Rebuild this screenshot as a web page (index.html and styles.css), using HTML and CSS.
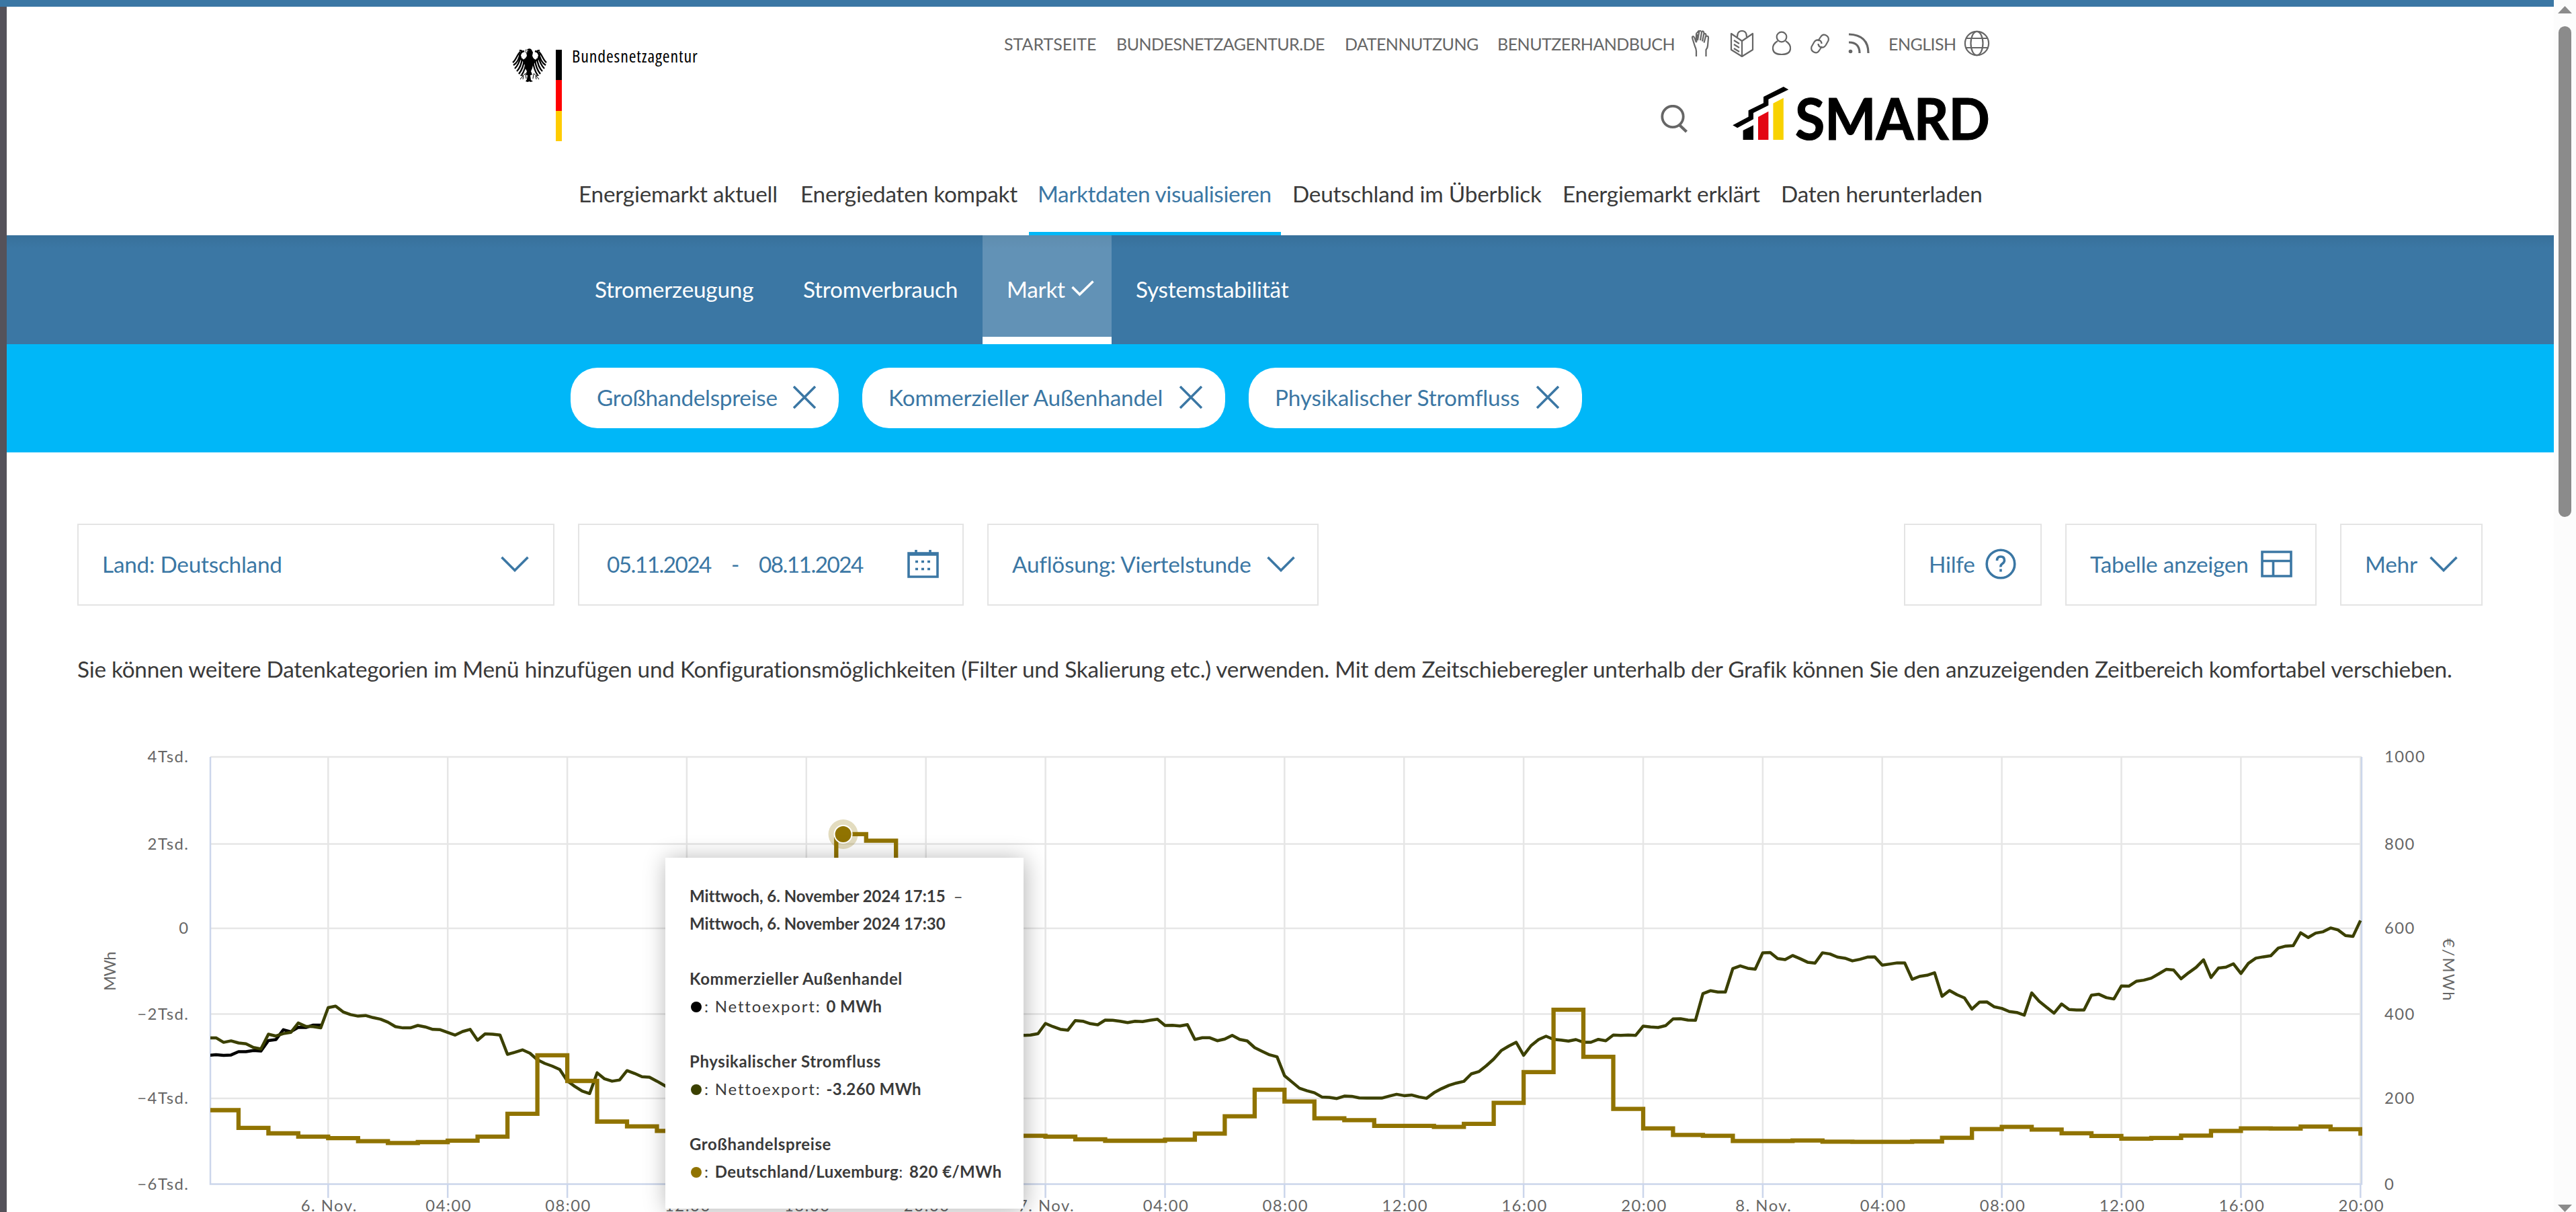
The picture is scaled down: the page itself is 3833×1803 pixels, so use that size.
FILE: index.html
```
<!DOCTYPE html>
<html lang="de">
<head>
<meta charset="utf-8">
<title>SMARD | Marktdaten visualisieren</title>
<link rel="stylesheet" href="styles.css">
</head>
<body>
<div class="window">
  <div class="topbar"></div>
  <div class="frame"></div>
  <main class="page">
    <header class="header">
      <div class="head-top">
        <a class="brand">
          <svg class="eagle" viewBox="0 0 52 50" width="52" height="50">
            <path d="M23 1q4-2 6 1l2 4-1 5q2 6 7 6l-6 8q-1 6-3 9l2 5-3 1 1 7 3 2-4 1-1-1-3 1-3-1 2-3 1-6-3-1 2-5q-3-4-3-9l-4-8q5-1 7-6l-1-5z"/>
            <g id="wing" fill="none" stroke="#000">
              <path stroke-width="2.600" d="M20 19C12 18 9 10 15 5l3-1M15 4l-4-1"/>
              <path stroke-width="2.300" d="M12 5C7 10 6 17 1 21M12 8C10 16 8 21 2 25M13 12C11 20 9 25 4 30M15 15C14 23 12 29 7 34M18 17C17 26 15 32 10 38M21 19C20 29 18 34 14 40"/>
              <path stroke-width="1" d="M20 37l-4 4-4-1M17 41l-1 5M16 41l-4 5M20 38l1 7"/>
            </g>
            <use href="#wing" transform="matrix(-1 0 0 1 52 0)"/>
            <path d="M20 2l5 1-3 2 2 2-4-1z" fill="#fff" stroke="#000" stroke-width=".7"/>
          </svg>
          <span class="flag"><i></i><i></i><i></i></span>
          <span class="brand-name">Bundesnetzagentur</span>
        </a>
        <div class="meta">
          <nav class="service">
            <a class="start">STARTSEITE</a><a>BUNDESNETZAGENTUR.DE</a><a>DATENNUTZUNG</a><a>BENUTZERHANDBUCH</a>
            <svg viewBox="2516 45 34 40" width="34" height="40"><path d="M2524 84v-8q0-3-2-7l-3.500-11q-1-4 .6-4t3 4l1.900 5M2524 63v-12q0-2 1.500-2.500l2.500-3q2-1 3 1.500M2524 63l2-12M2530 60l2-12q1.500-3 3-.5l.5 2-2.500 12M2526 60l2.500-14M2535.500 50q3-.5 3 2.500l-3 11M2539 54q3-1 3 2l-1 12q-.5 4-2.500 6v10"/></svg>
            <svg viewBox="2573 45 38 40" width="38" height="40"><path d="M2576 50l16 11 16-11v24l-16 10-16-10zM2592 61v23M2585 55q0-9 7-9t7 9M2580 60l8 5M2580 66l8 5M2580 72l8 5"/></svg>
            <svg viewBox="2635 45 32 40" width="32" height="40"><circle cx="2651" cy="55" r="7.300"/><path d="M2645 61q-8 5-7 12 1 8 13 8t13-8q1-7-7-12"/></svg>
            <svg viewBox="2691 45 34 40" width="34" height="40"><path d="M2705 61l4-6q3-5 8-2.500t3.500 8l-4 7q-3 4.500-8 2.500-3-1.500-3-5M2711 69l-4 6q-3 5-8 2.500t-3.500-8l4-7q3-4.500 8-2.500 3 1.500 3 5"/></svg>
            <svg viewBox="2748 45 36 40" width="36" height="40"><circle cx="2753.500" cy="76.500" r="2.800" class="solid"/><path d="M2751 63q16 0 16 16M2751 51q29 1 29 28" class="heavy"/></svg>
            <a>ENGLISH</a>
            <svg viewBox="2921 45 40 40" width="40" height="40"><circle cx="2941.500" cy="64.500" r="17.600"/><ellipse cx="2941.500" cy="64.500" rx="9" ry="17.600"/><path d="M2926 57h31M2926 71h31"/></svg>
          </nav>
          <div class="logo-row">
            <svg class="search" viewBox="0 0 42 42" width="42" height="42"><circle cx="19" cy="17.500" r="15.700"/><path d="M29 30l10.500 10"/></svg>
            <svg class="logo" viewBox="0 0 386 82" width="386" height="82">
              <path d="M76.800 1l7.500 4.300-29.900 14.400v9L32 40v9.300L8.200 62.300l-7-4 23.400-12.600v-9.400L47 25.300V16z"/>
              <path d="M16.600 80V66L32 58.300V80z"/>
              <path fill="#e30613" d="M39 80V46l15.400-8.300V80z"/>
              <path fill="#f8d200" d="M61.400 80V25.700l15.400-8V80z"/>
              <text x="94" y="80" textLength="290" lengthAdjust="spacingAndGlyphs">SMARD</text>
            </svg>
          </div>
        </div>
      </div>
      <nav class="mainnav">
        <a>Energiemarkt aktuell</a><a>Energiedaten kompakt</a><a class="active">Marktdaten visualisieren</a><a>Deutschland im Überblick</a><a>Energiemarkt erklärt</a><a>Daten herunterladen</a>
      </nav>
    </header>

    <nav class="tabs">
      <a>Stromerzeugung</a><a>Stromverbrauch</a>
      <a class="active">Markt <svg viewBox="0 0 34 24" width="34" height="24"><path d="M1.500 10l11 11L32.500 1.500"/></svg></a>
      <a>Systemstabilität</a>
    </nav>

    <div class="filters">
      <span class="pill">Großhandelspreise <svg viewBox="0 0 34 34" width="34" height="34"><path d="M1 1l32 32M33 1L1 33"/></svg></span>
      <span class="pill">Kommerzieller Außenhandel <svg viewBox="0 0 34 34" width="34" height="34"><path d="M1 1l32 32M33 1L1 33"/></svg></span>
      <span class="pill">Physikalischer Stromfluss <svg viewBox="0 0 34 34" width="34" height="34"><path d="M1 1l32 32M33 1L1 33"/></svg></span>
    </div>

    <section class="toolbar">
      <div class="box country">Land: Deutschland <svg viewBox="0 0 42 24" width="42" height="24"><path d="M1.500 2L21 21.500 40.500 2"/></svg></div>
      <div class="box dates"><span>05.11.2024</span><span class="dash">-</span><span>08.11.2024</span>
        <svg viewBox="0 0 47 42" width="47" height="42"><path d="M2 5h43v35H2zM13 0v5M34 0v5M2 7h43"/><path stroke-dasharray="4 5" d="M12 17.500h24M12 28.500h24"/></svg></div>
      <div class="box res">Auflösung: Viertelstunde <svg viewBox="0 0 42 24" width="42" height="24"><path d="M1.500 2L21 21.500 40.500 2"/></svg></div>
      <div class="box help">Hilfe <svg viewBox="0 0 46 46" width="46" height="46"><circle cx="23" cy="23" r="20.800"/><path d="M17.500 18q0-6 5.500-6t5.500 5.500q0 3-3 5t-2.500 5M23 30.500v4"/></svg></div>
      <div class="box table">Tabelle anzeigen <svg viewBox="0 0 47 40" width="47" height="40"><path d="M2 2h43v36H2zM2 15.500h43M18.500 15.500V38"/></svg></div>
      <div class="box more">Mehr <svg viewBox="0 0 42 24" width="42" height="24"><path d="M1.500 2L21 21.500 40.500 2"/></svg></div>
    </section>

    <p class="intro">Sie können weitere Datenkategorien im Menü hinzufügen und Konfigurationsmöglichkeiten (Filter und Skalierung etc.) verwenden. Mit dem Zeitschieberegler unterhalb der Grafik können Sie den anzuzeigenden Zeitbereich komfortabel verschieben.</p>

    <section class="chart">
      <svg id="chart" viewBox="10 1100 3790 703" width="3790" height="703"></svg>
      <div class="tooltip">
        <div class="date"><b>Mittwoch, 6. November 2024 17:15</b>&nbsp; –</div>
        <div class="date"><b>Mittwoch, 6. November 2024 17:30</b></div>
        <div class="group"><b>Kommerzieller Außenhandel</b></div>
        <div><i class="dot black"></i><span class="plain">: Nettoexport: </span><b>0 MWh</b></div>
        <div class="group"><b>Physikalischer Stromfluss</b></div>
        <div><i class="dot green"></i><span class="plain">: Nettoexport: </span><b>-3.260 MWh</b></div>
        <div class="group"><b>Großhandelspreise</b></div>
        <div><i class="dot gold"></i><span class="plain">: </span><b>Deutschland/Luxemburg</b><span class="plain">: </span><b>820 €/MWh</b></div>
      </div>
    </section>
  </main>
  <aside class="scrollbar"><svg viewBox="0 0 21 11" width="21" height="11"><path d="M10.500 0L21 11H0z"/></svg><i class="thumb"></i><svg class="down" viewBox="0 0 21 11" width="21" height="11"><path d="M10.500 11L21 0H0z"/></svg></aside>
</div>
<script src="chart.js"></script>
</body>
</html>
```
FILE: styles.css
```
* { box-sizing: border-box; }
body {
  margin: 0;
  background: #fff;
  color: #3a3a3a;
  font: 33.3px/40px Lato, "Noto Sans", sans-serif;
  letter-spacing: -0.22px;
}
a { white-space: nowrap; }
svg { flex: none; display: block; }

.window {
  display: grid;
  grid-template: 10px 1793px / 10px 3790px 33px;
  width: 3833px;
  height: 1803px;
  overflow: hidden;
}
.topbar { grid-area: 1 / 1 / 2 / 3; background: #3b77a4; }
.frame { grid-area: 2 / 1; background: #55525a; }
.page { grid-area: 2 / 2; min-width: 0; overflow: hidden; }

.scrollbar {
  grid-area: 1 / 3 / 3 / 4;
  display: flex;
  flex-direction: column;
  padding: 9px 6px 0;
  background: #fcfcfc;
  fill: #8b8b8b;
}
.thumb { width: 19px; height: 733px; margin: 19px 0 0 1px; border-radius: 10px; background: #8b8b8b; }
.scrollbar .down { margin-top: 1023px; }

/* header */
.header { height: 340px; padding-left: 752px; }
.head-top { display: flex; height: 208px; }
.brand { display: flex; width: 732px; padding-top: 62px; align-items: flex-start; }
.flag { width: 9px; margin: 2px 15px 0 13px; }
.flag i { display: block; height: 45.300px; background: #000; }
.flag i:nth-child(2) { background: #f00; }
.flag i:nth-child(3) { background: #fc0; }
.brand-name {
  color: #000;
  font: 26px/30px "Open Sans", sans-serif;
  font-stretch: 75%;
  letter-spacing: 0.850px;
  margin-top: -4px;
}
.meta { padding-top: 35px; }
.service {
  display: grid;
  grid-template-columns: 167px 340px 227px 288px 57px 62px 56px 57px 62px 111px 40px;
  align-items: center;
  height: 40px;
  color: #666;
  font-size: 25px;
  line-height: 30px;
  letter-spacing: -0.520px;
}
.service .start { letter-spacing: 0; }
.service svg, .search { fill: none; stroke: #666; stroke-width: 2.200; stroke-linejoin: round; }
.service .solid { fill: #666; stroke: none; }
.service .heavy { stroke-width: 3.200; }
.logo-row { display: flex; margin-top: 43px; padding-left: 976px; align-items: flex-start; }
.search { margin-top: 28px; }
.search circle { stroke-width: 3.800; }
.search path { stroke-width: 4.400; }
.logo { margin-left: 65px; }
.logo text { font: bold 87px Lato, sans-serif; letter-spacing: 0; stroke: #000; stroke-width: 1.200; }

.mainnav {
  display: grid;
  grid-template-columns: 330px 353px 379px 402px 325px 310px;
  height: 132px;
  margin-left: 99px;
}
.mainnav a { padding-top: 50px; }
.mainnav .active {
  width: 375px;
  margin-left: -13px;
  padding-left: 13px;
  border-bottom: 5px solid #00b7f8;
  color: #3b77a4;
  letter-spacing: -0.380px;
}

/* category tabs */
.tabs {
  display: flex;
  height: 162px;
  padding-left: 839px;
  color: #fff;
  background: linear-gradient(rgba(0, 0, 0, 0.060), transparent 20px) #3b77a4;
}
.tabs a { width: 311px; padding: 60px 0 0 36px; }
.tabs a:nth-child(2) { width: 302px; padding-left: 35px; }
.tabs .active {
  display: flex;
  width: 192px;
  padding-left: 36px;
  border-bottom: 11px solid #fff;
  background: rgba(255, 255, 255, 0.200);
}
.tabs .active svg { margin: 7px 0 0 9px; }
.tabs svg, .pill svg, .box svg { fill: none; stroke: currentColor; stroke-width: 3.600; }

.filters { display: flex; gap: 35px; height: 161px; padding: 35px 0 0 839px; background: #00b7f8; }
.pill {
  display: flex;
  align-items: center;
  justify-content: space-between;
  width: 399px;
  height: 90px;
  padding: 0 34px 2px 39px;
  border-radius: 40px;
  background: #fff;
  color: #3b77a4;
  letter-spacing: -0.100px;
}
.pill:first-child { letter-spacing: -0.280px; }
.pill:nth-child(2) { width: 540px; }
.pill:nth-child(3) { width: 496px; }

/* toolbar */
.toolbar { display: flex; gap: 35px; padding: 106px 0 0 105px; color: #3b77a4; }
.box {
  display: flex;
  align-items: center;
  justify-content: space-between;
  height: 122px;
  padding: 0 36px 2px 35px;
  border: 2px solid #e4e4e4;
}
.country { width: 710px; }
.dates { width: 574px; padding-left: 41px; padding-right: 35px; letter-spacing: -1.540px; }
.dates svg { margin-left: 36px; }
.res { width: 493px; padding-right: 33px; }
.help { width: 205px; margin-left: 836px; }
.table { width: 374px; padding-right: 34px; }
.more { width: 212px; padding-right: 35px; }

.intro { margin: 74px 0 0; padding-left: 105px; white-space: nowrap; letter-spacing: -0.256px; }

/* chart */
.chart { position: relative; margin-top: 85px; }
.chart text { font: 23.800px Lato, sans-serif; fill: #666; letter-spacing: 1.500px; }
.grid { stroke: #e6e6e6; stroke-width: 2.500; }
.axis { stroke: #ccd6eb; stroke-width: 2.500; }
.line { fill: none; stroke-width: 4.500; stroke-linejoin: round; }
.commercial { stroke: #000; }
.physical { stroke: #3b4000; }
.price { stroke: #907300; stroke-width: 6.300; stroke-linejoin: miter; }

.tooltip {
  position: absolute;
  left: 980px;
  top: 176px;
  width: 533px;
  height: 522px;
  padding: 36px 0 0 36px;
  background: #fff;
  box-shadow: 2px 2px 32px rgba(0, 0, 0, 0.300);
  font-size: 24px;
  line-height: 41px;
  letter-spacing: 0.420px;
  white-space: nowrap;
}
.tooltip .date { letter-spacing: -0.050px; }
.tooltip .group { margin-top: 41px; }
.tooltip .group b { letter-spacing: 0.600px; }
.tooltip .plain { letter-spacing: 1.800px; }
.dot { display: inline-block; width: 16px; height: 16px; margin: 0 4px 0 2px; border-radius: 50%; }
.black { background: #000; }
.green { background: #3b4000; }
.gold { background: #907300; }
```
FILE: chart.js
```
const svg = document.getElementById("chart");
const MIDNIGHT = 488.3, HOUR = 44.47;
const BOTTOM = 1761.5, LEFT = 313, RIGHT = 3514;
const out = [];
const x = h => (MIDNIGHT + h * HOUR).toFixed(1);

// grid and axes
const rows = [["4Tsd.", 1000, 1126], ["2Tsd.", 800, 1255.5], ["0", 600, 1381], ["−2Tsd.", 400, 1508.5], ["−4Tsd.", 200, 1634], ["−6Tsd.", 0, 1761.5]];
for (const [l, r, y] of rows) {
  if (y < BOTTOM) out.push(`<path class="grid" d="M${LEFT} ${y}H${RIGHT}"/>`);
  out.push(`<text x="281.500" y="${y + 8}" text-anchor="end">${l}</text><text x="3548" y="${y + 8}">${r}</text>`);
}
for (let h = 0; h <= 68; h += 4) {
  out.push(`<path class="grid" d="M${x(h)} 1126V${BOTTOM}"/><path class="axis" d="M${x(h)} ${BOTTOM}V1782"/>`);
  const label = h % 24 ? String(h % 24).padStart(2, "0") + ":00" : `${6 + h / 24}. Nov.`;
  out.push(`<text x="${+x(h) + 1.5}" y="1802" text-anchor="middle">${label}</text>`);
}
out.push(`<path class="axis" fill="none" d="M${LEFT} 1126V${BOTTOM}H${RIGHT}V1126"/>`);
out.push(`<text transform="translate(172 1474) rotate(-90)" textLength="60">MWh</text>`);
out.push(`<text transform="translate(3635 1396) rotate(90)" textLength="94">€/MWh</text>`);

// series blocks: first step, y origin, y unit, readings
const physical = [
  [-16, 1100, 0.44836, "990 990 1005 1000 1007 1010 1022 1027 978 984 976 972 941 952 953 957 890 885 904 913 918 916 923 928 938 953 957 957 949 954 962 963 972 981 969 962 998 977 978 981 1045 1038 1030 1041 1063 1075 1084 1095 1133 1151 1167 1175 1106 1126 1134 1130 1099 1108 1119 1121 1134 1148 1162"],
  [92, 1280, 0.33356, "781 780 779 773 727 741 753 757 714 717 728 733 712 713 717 723 717 719 713 708 736 735 738 732 798 791 791 804 797 780 798 805 835 851 867 876 960 988 1016 1027 1036 1055 1057 1062 1051 1052 1059 1060 1060 1060 1051 1043 1049 1046 1055 1061 1036 1018 1003 993 985 952 942 916 886 848 828 811 869 826 799 784 798 801 806 799 811 811 798 804 779 780 779 780 739 743 745 737 707 706 712 713 594 581 587 587 482 470 481 485 412 411 438 442 424 438 454 458 412 417 431 436 448 441 431 430 467 462 457 457 530 517 512 501 606 580 599 613 663 632 631 653 660 674 678 690 591 628 655 681 640 665 667 667 601 597 612 618 560 561 539 534 525 506 486 489 528 501 477 443 522 480 476 461 504 459 436 430 425 391 382 380 323 344 324 318 301 310 335 339 268"]
];
const commercial = [[-16, 1100, 0.44836, "1048 1046 1048 1047 1036 1036 1032 1034 999 996 963 970 955 956 948 948"]];
const price = [
  [-4, 1100, 0.44836, "1230 1289 1307 1318 1323 1333 1339 1336 1331 1318 1242 1048 1133 1268 1284 1299 1299"],
  [16, 1180, 0.3973, "900 153 178 900 900"],
  [22, 1280, 0.33356, "1228 1228 1232 1244 1250 1250 1245 1218 1141 1023 1075 1150 1158 1184 1184 1188 1175 1081 944 666 876 1108 1195 1224 1228 1251 1251 1249 1254 1255 1255 1253 1237 1198 1188 1200 1217 1229 1241 1238 1227 1206 1195 1196 1187 1199 1228"]
];
const points = ([first, y0, unit, list]) => list.split(" ").map((v, i) => [first + i, (y0 + v * unit).toFixed(1)]);

out.push(`<clipPath id="plot"><rect x="${LEFT}" y="1120" width="${RIGHT - LEFT + 1}" height="645"/></clipPath><g clip-path="url(#plot)">`);
for (const [name, blocks] of [["commercial", commercial], ["physical", physical]])
  for (const b of blocks)
    out.push(`<path class="line ${name}" d="M${points(b).map(([i, y]) => x(i / 4) + " " + y).join("L")}"/>`);
for (const b of price)
  out.push(`<path class="line price" d="M${points(b).map(([h, y], i) => (i ? "H" + x(h) + "V" : x(h) + " ") + y).join("")}"/>`);
out.push(`</g><circle cx="1254.600" cy="1241" r="22" fill="#907300" opacity=".25"/><circle cx="1254.600" cy="1241" r="13" fill="#907300" stroke="#fff" stroke-width="2"/>`);
svg.innerHTML = out.join("");
```
